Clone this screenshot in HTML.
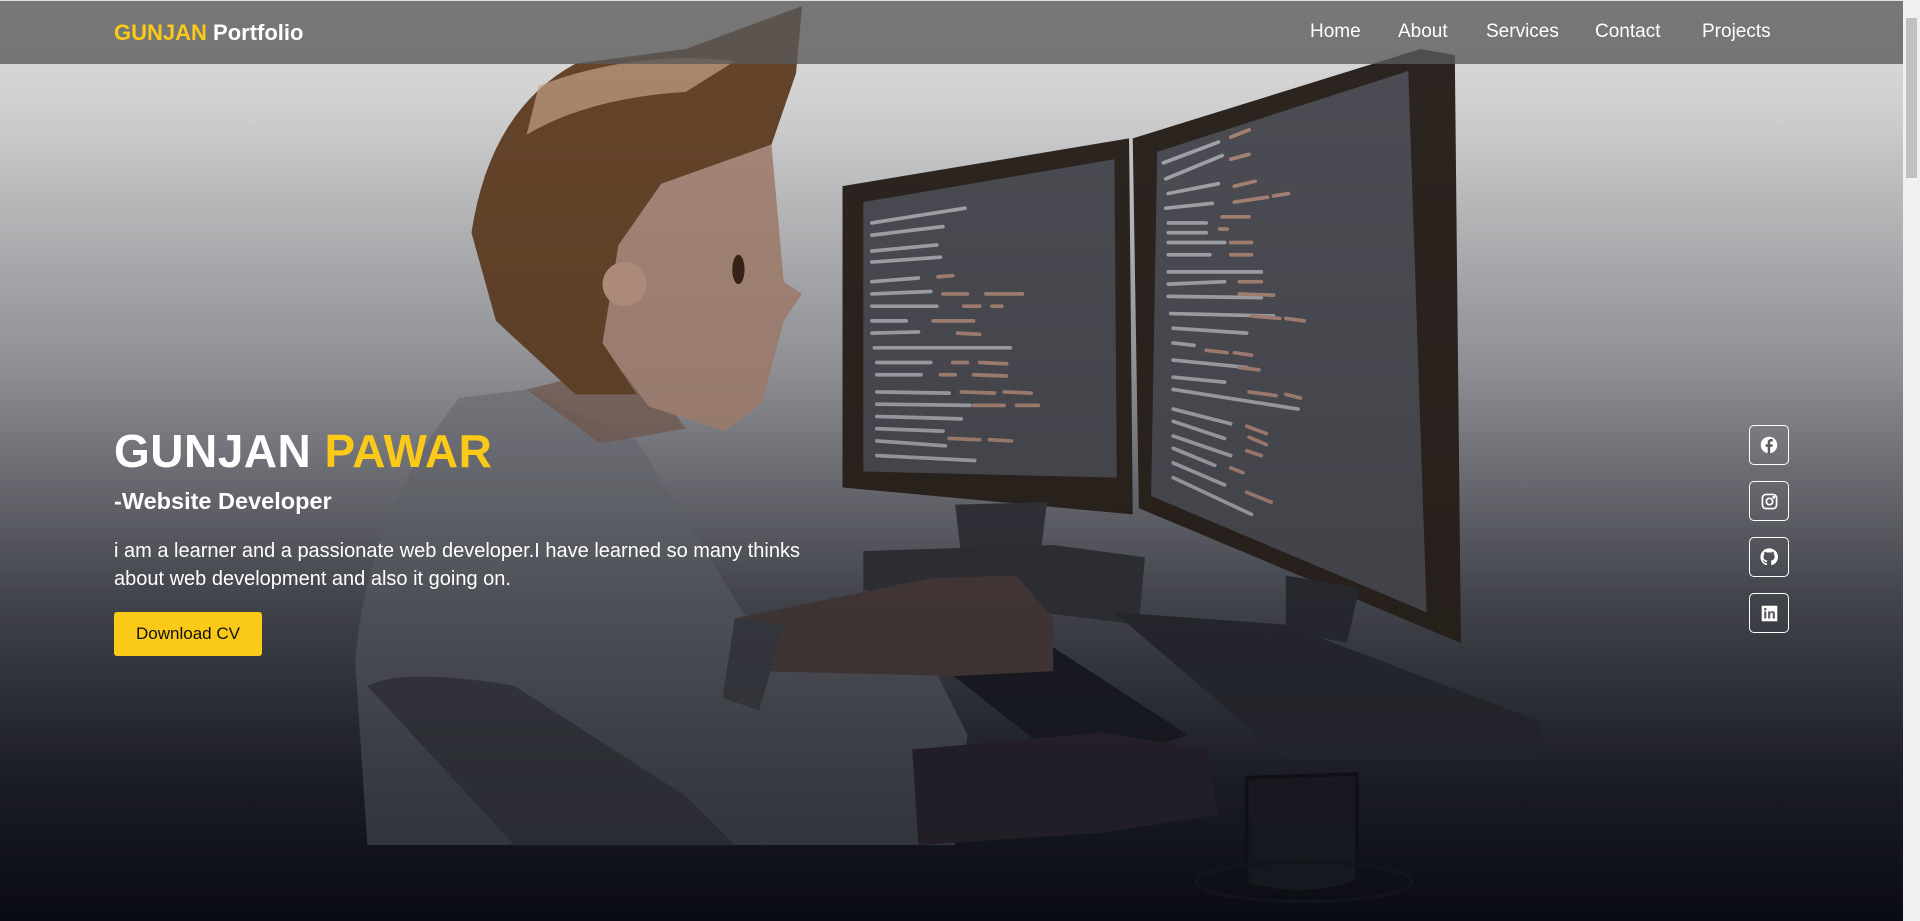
<!DOCTYPE html>
<html><head><meta charset="utf-8"><style>
*{margin:0;padding:0;box-sizing:border-box}
html,body{width:1920px;height:921px;overflow:hidden;font-family:"Liberation Sans",sans-serif;background:#f1f1f1}
.page{position:absolute;left:0;top:0;width:1903px;height:921px;overflow:hidden}
svg.bg{position:absolute;left:0;top:0}
.nav{position:absolute;left:0;top:1px;width:1903px;height:63px;background:rgba(90,90,90,.78);}
.logo{position:absolute;left:114px;top:19px;font-size:22px;font-weight:bold;color:#fff;letter-spacing:0}
.logo span{color:#fbc918}
.links{position:absolute;top:20px;font-size:19px;color:#fff}
.links a{position:absolute;white-space:nowrap}
h1{position:absolute;left:114px;top:424px;font-size:46px;font-weight:bold;color:#fff;letter-spacing:.5px}
h1 span{color:#fbc918}
h2{position:absolute;left:114px;top:488px;font-size:23.5px;font-weight:bold;color:#fff}
p{position:absolute;left:114px;top:537px;width:720px;font-size:20px;line-height:28px;color:#fff}
.btn{position:absolute;left:114px;top:612px;width:148px;height:44px;background:#fbc918;border-radius:3px;color:#111;font-size:17px;line-height:44px;text-align:center}
.soc{position:absolute;left:1749px;width:40px;height:40px;border:1.5px solid #fff;border-radius:5px;display:flex;align-items:center;justify-content:center}
.sb{position:absolute;left:1903px;top:0;width:17px;height:921px;background:#f1f1f1}
.sb i{position:absolute;left:3px;top:18px;width:11px;height:160px;background:#c1c1c1}
</style></head><body>
<div class="page">
<svg class="bg" width="1903" height="921" viewBox="0 0 1554 752" preserveAspectRatio="none">
<defs><linearGradient id="g" x1="0" y1="0" x2="0" y2="1">
<stop offset="0" stop-color="#e0e0e0"/><stop offset=".12" stop-color="#d4d4d5"/><stop offset=".4" stop-color="#9c9da2"/><stop offset=".65" stop-color="#4d4f58"/><stop offset=".85" stop-color="#20222d"/><stop offset="1" stop-color="#0c0e1a"/></linearGradient>
<linearGradient id="sh" x1="0" y1="0" x2="0" y2="1"><stop offset="0" stop-color="#000" stop-opacity=".0"/><stop offset="1" stop-color="#000" stop-opacity=".55"/></linearGradient></defs>
<rect width="1554" height="752" fill="url(#g)"/>
<path d="M300 690 L290 540 Q300 420 375 325 L430 318 L520 360 L610 505 L640 530 L760 540 L790 600 L780 690 Z" fill="#6a6c73" opacity=".5"/>
<path d="M430 318 L520 296 L560 350 L490 362 Z" fill="#7a6258" opacity=".8"/>
<path d="M500 140 L630 118 L640 230 L655 240 L640 262 L622 330 L592 352 L530 332 L490 280 Z" fill="#a8887a"/>
<path d="M385 190 Q400 90 470 52 L560 40 L655 5 L650 60 L630 118 L540 150 L505 200 L492 280 L520 322 L470 322 L405 262 Z" fill="#65452b"/>
<path d="M440 70 Q520 40 600 50 L560 75 Q480 80 430 110 Z" fill="#c8a58a" opacity=".7"/>
<circle cx="510" cy="232" r="18" fill="#b89483"/>
<ellipse cx="603" cy="220" rx="5" ry="12" fill="#3a2418"/>
<path d="M688 152 L922 113 L925 420 L688 398 Z" fill="#2d2520"/>
<path d="M705 165 L910 130 L912 390 L705 385 Z" fill="#4c4d54"/>
<path d="M925 113 L1160 40 L1188 45 L1193 525 L930 415 Z" fill="#2d2520"/>
<path d="M945 124 L1150 58 L1165 500 L940 405 Z" fill="#4d4e55"/>
<g stroke="#a4a6ac" stroke-width="3" stroke-linecap="round">
<path d="M712 182 L788 170 M712 192 L770 185 M712 205 L765 200 M712 214 L768 210 M712 230 L750 227 M712 240 L760 238 M712 250 L765 250 M712 262 L740 262 M712 272 L750 271 M714 284 L825 284 M716 296 L760 296 M716 306 L752 306 M716 320 L775 321 M716 330 L792 331 M716 340 L785 342 M716 350 L770 352 M716 360 L772 364 M716 372 L796 376"/>
<path d="M950 133 L995 116 M952 146 L998 127 M954 158 L995 150 M952 170 L990 166 M954 182 L985 182 M954 190 L985 190 M954 198 L1000 198 M954 208 L988 208 M954 222 L1030 222 M954 232 L1000 230 M954 242 L1030 243 M956 256 L1040 258 M958 268 L1018 272 M958 280 L975 282 M958 294 L1018 300 M958 308 L1000 312 M958 318 L1060 334 M958 334 L1005 346 M958 344 L1000 358 M958 356 L1005 372 M958 366 L992 380 M958 378 L1000 396 M958 390 L1022 420"/></g>
<g stroke="#a88576" stroke-width="3" stroke-linecap="round">
<path d="M766 226 L778 225 M770 240 L790 240 M805 240 L835 240 M787 250 L800 250 M810 250 L818 250 M762 262 L795 262 M782 272 L800 273 M778 296 L790 296 M800 296 L822 297 M768 306 L780 306 M795 306 L822 307 M785 320 L812 321 M820 320 L842 321 M795 331 L820 331 M830 331 L848 331 M775 358 L800 359 M808 359 L826 360"/>
<path d="M1005 112 L1020 106 M1005 130 L1020 126 M1008 152 L1025 148 M1008 165 L1035 161 M1040 160 L1052 158 M998 177 L1020 177 M996 187 L1002 187 M1005 198 L1022 198 M1005 208 L1022 208 M1012 230 L1030 230 M1012 240 L1040 241 M1022 258 L1045 260 M1050 260 L1065 262 M985 286 L1002 288 M1008 288 L1022 290 M1012 300 L1028 302 M1020 320 L1042 323 M1050 322 L1062 325 M1018 348 L1034 354 M1020 357 L1034 363 M1018 368 L1030 372 M1005 382 L1015 386 M1018 402 L1038 410"/></g>
<path d="M780 412 L855 410 L850 450 L785 455 Z" fill="#34363d"/>
<path d="M705 450 L860 445 L935 455 L930 510 L705 482 Z" fill="#32343b"/>
<path d="M1050 470 L1110 480 L1100 525 L1050 515 Z" fill="#2c2e36"/>
<path d="M910 500 L1050 510 L1260 590 L1255 620 L1050 620 Z" fill="#2a2c34"/>
<path d="M770 545 L850 522 L970 600 L880 632 Z" fill="#1c1e26"/>
<path d="M600 505 L760 472 L830 470 L860 505 L860 548 L780 552 L620 548 Z" fill="#4a3d3d"/>
<path d="M600 505 L640 510 L620 580 L590 570 Z" fill="#3c3e46"/>
<path d="M745 612 L900 598 L985 612 L995 665 L900 680 L750 690 Z" fill="#2a2530"/>
<path d="M300 560 Q330 545 420 560 L560 650 L600 690 L420 690 Z" fill="#30323b" opacity=".7"/>
<path d="M1018 635 L1108 632 L1108 720 Q1065 735 1018 722 Z" fill="#1c1e27" stroke="#13141a" stroke-width="3"/>
<ellipse cx="1065" cy="720" rx="88" ry="16" fill="none" stroke="#181a22" stroke-width="3"/>
<rect y="0" width="1554" height="752" fill="url(#sh)" opacity=".4"/>
</svg>
<div class="nav">
<div class="logo"><span>GUNJAN</span> Portfolio</div>
<div class="links">
<a style="left:1310px">Home</a><a style="left:1398px">About</a><a style="left:1486px">Services</a><a style="left:1595px">Contact</a><a style="left:1702px">Projects</a>
</div></div>
<h1>GUNJAN <span>PAWAR</span></h1>
<h2>-Website Developer</h2>
<p>i am a learner and a passionate web developer.I have learned so many thinks about web development and also it going on.</p>
<div class="btn">Download CV</div>
<div class="soc" style="top:425px"><svg width="18" height="18" viewBox="0 0 24 24"><circle cx="12" cy="12" r="11" fill="#fff"/><path d="M13.5 24V14.5H16.5L17 11H13.5V9C13.5 8 13.9 7.3 15.2 7.3H17V4.2C16.5 4.1 15.5 4 14.5 4C12 4 10.3 5.5 10.3 8.3V11H7.5V14.5H10.3V24Z" fill="#5a5b62"/></svg></div>
<div class="soc" style="top:481px"><svg width="17" height="17" viewBox="0 0 24 24" fill="none" stroke="#fff" stroke-width="2.4"><rect x="2" y="2" width="20" height="20" rx="5"/><circle cx="12" cy="12" r="4.5"/><circle cx="18" cy="6" r=".8" fill="#fff"/></svg></div>
<div class="soc" style="top:537px"><svg width="18" height="18" viewBox="0 0 24 24"><path fill="#fff" d="M12 .5A11.5 11.5 0 0 0 8.4 22.9c.6.1.8-.3.8-.6v-2.2c-3.2.7-3.9-1.4-3.9-1.4-.5-1.3-1.3-1.7-1.3-1.7-1-.7.1-.7.1-.7 1.2.1 1.8 1.2 1.8 1.2 1 1.8 2.7 1.3 3.4 1 .1-.8.4-1.3.7-1.6-2.6-.3-5.3-1.3-5.3-5.7 0-1.3.5-2.3 1.2-3.1-.1-.3-.5-1.5.1-3.1 0 0 1-.3 3.2 1.2a11 11 0 0 1 5.8 0c2.2-1.5 3.2-1.2 3.2-1.2.6 1.6.2 2.8.1 3.1.8.8 1.2 1.9 1.2 3.1 0 4.4-2.7 5.4-5.3 5.7.4.4.8 1.1.8 2.2v3.3c0 .3.2.7.8.6A11.5 11.5 0 0 0 12 .5Z"/></svg></div>
<div class="soc" style="top:593px"><svg width="17" height="17" viewBox="0 0 24 24"><rect x="1" y="1" width="22" height="22" fill="#fff"/><rect x="4.5" y="9" width="3" height="10" fill="#5a5b62"/><circle cx="6" cy="5.8" r="1.8" fill="#5a5b62"/><path d="M10 9h3v1.5c.6-1 1.7-1.8 3.3-1.8 2.5 0 3.3 1.6 3.3 4.2V19h-3v-5.5c0-1.3-.3-2.3-1.6-2.3s-2 1-2 2.3V19h-3Z" fill="#5a5b62"/></svg></div>
</div>
<div class="sb"><i></i></div>
</body></html>
